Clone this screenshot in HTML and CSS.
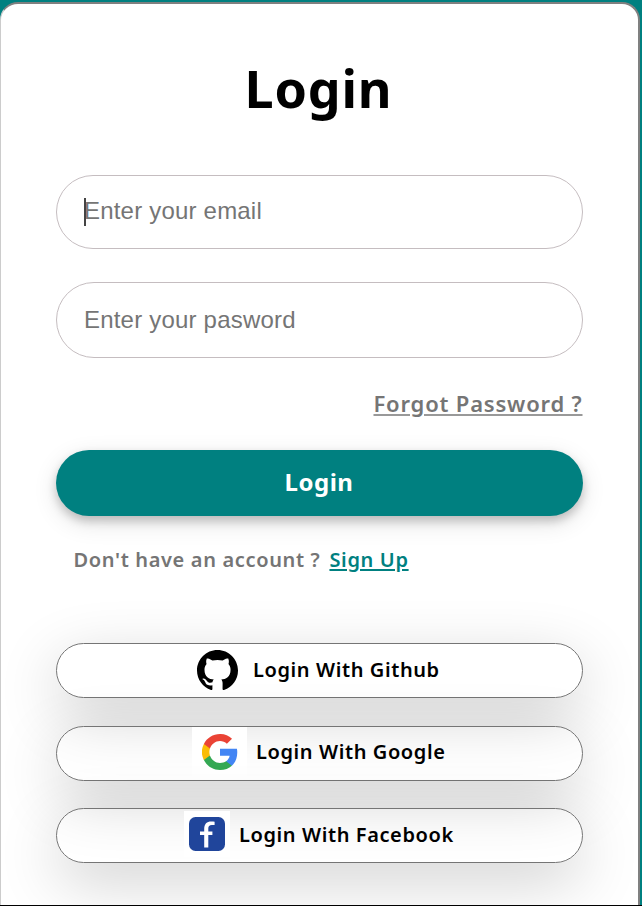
FILE: index.html
```html
<!DOCTYPE html>
<html lang="en">
<head>
<meta charset="utf-8">
<title>Login</title>
<link rel="stylesheet" href="styles.css">
</head>
<body>
<main class="card">
  <h1 class="title"><span>Login</span></h1>
  <form class="form">
    <div class="field email"><span class="caret"></span><input type="text" placeholder="Enter your email"></div>
    <div class="field password"><input type="password" placeholder="Enter your pasword"></div>
    <a class="forgot">Forgot Password ?</a>
    <button class="submit" type="button">Login</button>
  </form>
  <p class="signup"><span>Don't have an account ?</span><a>Sign Up</a></p>
  <div class="social">
    <button class="provider github" type="button">
      <svg class="logo" viewBox="0 0 16 16"><path d="M8 0C3.58 0 0 3.58 0 8c0 3.54 2.29 6.53 5.47 7.59.4.07.55-.17.55-.38 0-.19-.01-.82-.01-1.49-2.01.37-2.53-.49-2.69-.94-.09-.23-.48-.94-.82-1.13-.28-.15-.68-.52-.01-.53.63-.01 1.08.58 1.23.82.72 1.21 1.87.87 2.33.66.07-.52.28-.87.51-1.07-1.78-.2-3.64-.89-3.64-3.95 0-.87.31-1.59.82-2.15-.08-.2-.36-1.02.08-2.12 0 0 .67-.21 2.2.82A7.6 7.6 0 0 1 8 3.86c.68 0 1.36.09 2 .27 1.53-1.04 2.2-.82 2.2-.82.44 1.1.16 1.92.08 2.12.51.56.82 1.27.82 2.15 0 3.07-1.87 3.75-3.65 3.95.29.25.54.73.54 1.48 0 1.07-.01 1.93-.01 2.2 0 .21.15.46.55.38A8.01 8.01 0 0 0 16 8c0-4.42-3.58-8-8-8Z"/></svg>
      <span class="label">Login With Github</span>
    </button>
    <button class="provider google" type="button">
      <span class="tile"><svg class="logo" viewBox="2 2 44 44" preserveAspectRatio="none"><path fill="#4285f4" d="M45.1 24.5c0-1.6-.1-3.1-.4-4.5H24v8.5h11.8c-.5 2.8-2.1 5.1-4.4 6.7v5.5h7.1c4.2-3.8 6.6-9.5 6.6-16.2Z"/><path fill="#34a853" d="M24 46c5.9 0 10.9-2 14.5-5.3l-7.1-5.5c-2 1.3-4.5 2.1-7.4 2.1-5.7 0-10.5-3.9-12.3-9.1H4.3v5.7C8 41.1 15.4 46 24 46Z"/><path fill="#fbbc05" d="M11.7 28.2a13.1 13.1 0 0 1 0-8.4v-5.7H4.3a22 22 0 0 0 0 19.8Z"/><path fill="#ea4335" d="M24 10.7c3.2 0 6.1 1.1 8.4 3.3l6.3-6.3A21.1 21.1 0 0 0 24 2C15.4 2 8 6.9 4.3 14.1l7.4 5.7C13.5 14.6 18.3 10.7 24 10.7Z"/></svg></span>
      <span class="label">Login With Google</span>
    </button>
    <button class="provider facebook" type="button">
      <span class="tile"><svg class="logo" viewBox="0 0 36 34"><rect width="36" height="34" rx="6.5" fill="#20459b"/><path fill="#fff" d="M15.2 30.5V18H11v-3.6h4.2v-2.6c0-4.9 2.6-7.4 7-7.4 1.5 0 2.5.1 3.4.3v3.2h-2.7c-2.6 0-3.6 1.3-3.6 3.6v2.9h4.1V18h-4.1v12.5Z"/></svg></span>
      <span class="label">Login With Facebook</span>
    </button>
  </div>
</main>
</body>
</html>
```
FILE: styles.css
```css
* { box-sizing: border-box; }
html { height: 906px; overflow: hidden; background: teal; border-bottom: 1px solid #000; }
body { margin: 0; padding-top: 2px; height: 905px; overflow: hidden; font-family: "Noto Sans", sans-serif; font-weight: 600; }
.card {
  width: 640px; height: 903px; padding: 53px 55.5px 0 54.5px; overflow: hidden;
  background: #fff; border: 2px solid gray; border-left: 1px solid #ccc; border-bottom: 0; border-radius: 18px 18px 0 0;
}
.title { margin: 0 0 0 -1px; height: 118px; font-weight: 700; font-size: 52px; line-height: 62px; text-align: center; letter-spacing: 0.8px; }
.form { display: flex; flex-direction: column; }
.field { position: relative; display: flex; border: 1px solid #c5bdc0; border-radius: 38px; padding: 0 27.5px; }
.email { height: 74px; margin-bottom: 33px; padding-bottom: 3px; }
.password { height: 76px; }
.field input { flex: 1; border: 0; padding: 0; outline: 0; background: none; font: 24px "Liberation Sans", sans-serif; letter-spacing: 0.2px; }
.field input::placeholder { color: #757575; opacity: 1; }
.caret { position: absolute; left: 27.5px; top: 22px; width: 2px; height: 28px; background: #444; }
.forgot { align-self: flex-end; margin-top: 29px; height: 63px; font-size: 22px; line-height: 32px; letter-spacing: 0.8px; color: #757575; text-decoration: underline #999; text-decoration-thickness: 2px; text-underline-offset: 2px; }
button { font-family: inherit; font-weight: 600; cursor: pointer; }
.submit { height: 66px; border: 0; padding-bottom: 4px; border-radius: 33px; background: teal; color: #fff; font-size: 24px; font-weight: 700; letter-spacing: 0.5px; box-shadow: 0 5px 10px rgba(0,0,0,.2), 0 7px 25px rgba(0,0,0,.12); }
.signup { display: flex; gap: 9px; margin: 28px 0 0 18px; height: 99px; font-size: 20px; line-height: 32px; letter-spacing: 0.65px; color: #757575; white-space: nowrap; }
.signup a { color: teal; text-decoration: underline; text-decoration-thickness: 1.5px; text-underline-offset: 2px; }
.social { display: grid; gap: 27.5px; }
.provider {
  display: flex; align-items: center; justify-content: flex-start; height: 55px; border: 1px solid #757575; border-radius: 28px;
  padding: 0; background: transparent; color: #000; font-size: 20px; letter-spacing: 0.6px; white-space: nowrap;
  box-shadow: 0 18px 62px rgba(0,0,0,.19);
}
.label { padding-bottom: 2px; }
.logo { display: block; flex: none; }
.github { padding-left: 140.5px; gap: 15px; }
.github .logo { width: 41px; height: 41px; }
.google { padding-left: 135.5px; gap: 9px; }
.google .label { padding-bottom: 3px; }
.tile { display: grid; place-items: center; background: #fff; }
.google .tile { width: 55px; height: 53px; padding-bottom: 2px; }
.google .logo { width: 36px; height: 36px; }
.facebook { padding-left: 127.5px; gap: 9px; }
.facebook .tile { width: 46px; height: 46px; margin-bottom: 3px; }
.facebook .logo { width: 36px; height: 34px; }
```
